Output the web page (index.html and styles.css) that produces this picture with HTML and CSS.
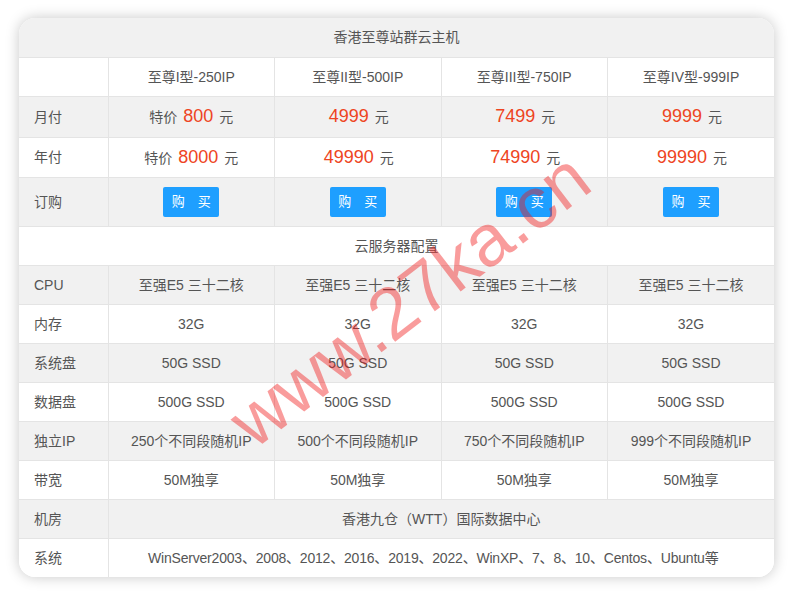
FILE: index.html
```html
<!DOCTYPE html>
<html lang="zh">
<head>
<meta charset="utf-8">
<title>香港至尊站群云主机</title>
<link rel="stylesheet" href="styles.css">
</head>
<body>
<div class="card">
  <table class="plans">
    <colgroup>
      <col class="c-label"><col class="c-plan"><col class="c-plan"><col class="c-plan"><col class="c-plan">
    </colgroup>
    <tr class="gray r39"><td colspan="5" class="center">香港至尊站群云主机</td></tr>
    <tr class="white r39"><td></td><td>至尊I型-250IP</td><td>至尊II型-500IP</td><td>至尊III型-750IP</td><td>至尊IV型-999IP</td></tr>
    <tr class="gray r41"><td class="label">月付</td><td>特价 <span class="price">800</span> 元</td><td><span class="price">4999</span> 元</td><td><span class="price">7499</span> 元</td><td><span class="price">9999</span> 元</td></tr>
    <tr class="white r40"><td class="label">年付</td><td>特价 <span class="price">8000</span> 元</td><td><span class="price">49990</span> 元</td><td><span class="price">74990</span> 元</td><td><span class="price">99990</span> 元</td></tr>
    <tr class="gray r49"><td class="label">订购</td><td><a class="btn"><span>购</span><span>买</span></a></td><td><a class="btn"><span>购</span><span>买</span></a></td><td><a class="btn"><span>购</span><span>买</span></a></td><td><a class="btn"><span>购</span><span>买</span></a></td></tr>
    <tr class="white r39"><td colspan="5" class="center">云服务器配置</td></tr>
    <tr class="gray r39"><td class="label">CPU</td><td>至强E5 三十二核</td><td>至强E5 三十二核</td><td>至强E5 三十二核</td><td>至强E5 三十二核</td></tr>
    <tr class="white r39"><td class="label">内存</td><td>32G</td><td>32G</td><td>32G</td><td>32G</td></tr>
    <tr class="gray r39"><td class="label">系统盘</td><td>50G SSD</td><td>50G SSD</td><td>50G SSD</td><td>50G SSD</td></tr>
    <tr class="white r39"><td class="label">数据盘</td><td>500G SSD</td><td>500G SSD</td><td>500G SSD</td><td>500G SSD</td></tr>
    <tr class="gray r39"><td class="label">独立IP</td><td>250个不同段随机IP</td><td>500个不同段随机IP</td><td>750个不同段随机IP</td><td>999个不同段随机IP</td></tr>
    <tr class="white r39"><td class="label">带宽</td><td>50M独享</td><td>50M独享</td><td>50M独享</td><td>50M独享</td></tr>
    <tr class="gray r39"><td class="label">机房</td><td colspan="4">香港九仓（WTT）国际数据中心</td></tr>
    <tr class="white r39 last"><td class="label">系统</td><td colspan="4" class="os">WinServer2003、2008、2012、2016、2019、2022、WinXP、7、8、10、Centos、Ubuntu等</td></tr>
  </table>
  <div class="watermark">www.27ka.cn</div>
</div>
</body>
</html>
```
FILE: styles.css
```css
* { box-sizing: border-box; }
html, body { margin: 0; padding: 0; background: #fff; }
body {
  padding: 18px 19px;
  font-family: "Liberation Sans", "Noto Sans CJK SC", sans-serif;
  color: #555;
  font-size: 14px;
}
.card {
  position: relative;
  width: 755px;
  border-radius: 16px;
  overflow: hidden;
  box-shadow: 0 0 14px rgba(0,0,0,0.22);
  background: #fff;
}
.plans {
  width: 100%;
  border-collapse: collapse;
  table-layout: fixed;
}
.c-label { width: 89px; }
.plans td {
  border: 1px solid #e4e4e4;
  text-align: center;
  vertical-align: middle;
  padding: 0;
  line-height: 20px;
}
.plans tr:first-child td { border-top: none; }
.plans tr.last td { border-bottom: none; }
.plans td:first-child { border-left: none; }
.plans td:last-child { border-right: none; }
.plans td.label { text-align: left; padding-left: 15px; }
.plans td.os { letter-spacing: -0.2px; padding-right: 16px; }
.gray { background: #f1f1f1; }
.white { background: #fff; }
.r39 { height: 39px; }
.r40 { height: 40px; }
.r41 { height: 41px; }
.r49 { height: 49px; }
.price {
  color: #ee4422;
  font-size: 18px;
  margin: 0 2px;
}
.btn {
  display: inline-flex;
  justify-content: center;
  align-items: center;
  gap: 13px;
  width: 56px;
  height: 30px;
  background: #1e9fff;
  color: #fff;
  border-radius: 2px;
  font-size: 13px;
  vertical-align: middle;
}
.watermark {
  position: absolute;
  left: 390px;
  top: 281px;
  transform: translate(-50%, -50%) rotate(-37.5deg);
  font-family: "Liberation Sans", sans-serif;
  font-size: 73px;
  line-height: 1;
  color: rgba(240, 20, 20, 0.42);
  white-space: nowrap;
  pointer-events: none;
}
```
